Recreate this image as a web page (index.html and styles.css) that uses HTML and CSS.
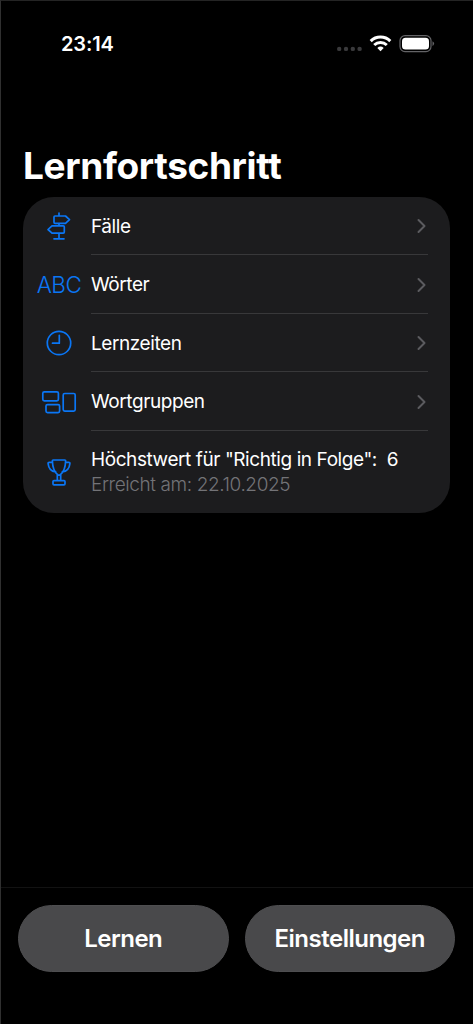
FILE: index.html
```html
<!DOCTYPE html>
<html lang="de">
<head>
<meta charset="utf-8">
<title>Lernfortschritt</title>
<link rel="stylesheet" href="styles.css">
</head>
<body>
<div class="screen">
  <header class="status">
    <span class="time">23:14</span>
    <svg class="status-icons" width="100" height="20" viewBox="0 0 100 20">
      <g fill="#3a3a3c"><circle cx="4.2" cy="14.9" r="2.2"/><circle cx="11" cy="14.9" r="2.2"/><circle cx="17.8" cy="14.9" r="2.2"/><circle cx="24.6" cy="14.9" r="2.2"/></g>
      <g fill="none" stroke="#fff" stroke-width="3"><path d="M35.7 7.1a14 14 0 0 1 19.6 0"/><path d="M39.2 11a9.2 9.2 0 0 1 12.6 0"/></g>
      <path d="M42.3 14a4.8 4.8 0 0 1 6.4 0L45.5 17.3z" fill="#fff"/>
      <rect x="65" y="1.6" width="31" height="16" rx="5" fill="none" stroke="#636366" stroke-width="1.2"/>
      <rect x="67" y="3.7" width="27" height="11.8" rx="3.5" fill="#fff"/>
      <path d="M97.5 7.2q1.6.8 1.6 2.4t-1.6 2.4z" fill="#636366"/>
    </svg>
  </header>
  <main class="content">
    <h1 class="title">Lernfortschritt</h1>
    <ul class="card">
      <li class="row">
        <svg class="icon" width="46" height="32" viewBox="0 0 46 32"><path d="M23 3v3M23 13.5v2.5M23 23.2v5.6M18 28.8h10M19 6h10.5l4 3.6-4 3.7H19q-1 0-1-1V7q0-1 1-1zM27.3 15.8H16l-4 3.7 4 3.6h11.3q1 0 1-1v-5.3q0-1-1-1z"/></svg>
        <div class="cell"><span class="label">Fälle</span><svg class="chevron" width="10" height="16" viewBox="0 0 10 16"><path d="M1.5 2l6 6-6 6"/></svg></div>
      </li>
      <li class="row">
        <span class="abc">ABC</span>
        <div class="cell"><span class="label">Wörter</span><svg class="chevron" width="10" height="16" viewBox="0 0 10 16"><path d="M1.5 2l6 6-6 6"/></svg></div>
      </li>
      <li class="row">
        <svg class="icon" width="46" height="32" viewBox="0 0 46 32"><circle cx="23" cy="16" r="11.7"/><path d="M23.3 8.3v7.9h-6.8"/></svg>
        <div class="cell"><span class="label">Lernzeiten</span><svg class="chevron" width="10" height="16" viewBox="0 0 10 16"><path d="M1.5 2l6 6-6 6"/></svg></div>
      </li>
      <li class="row">
        <svg class="icon" width="46" height="32" viewBox="0 0 46 32"><rect x="6.8" y="5.8" width="15.6" height="9" rx="1.5"/><rect x="10" y="18.6" width="13.6" height="8" rx="1.5"/><rect x="27.2" y="7.5" width="12" height="17.6" rx="1.5"/></svg>
        <div class="cell"><span class="label">Wortgruppen</span><svg class="chevron" width="10" height="16" viewBox="0 0 10 16"><path d="M1.5 2l6 6-6 6"/></svg></div>
      </li>
      <li class="row row-record">
        <svg class="icon" width="46" height="32" viewBox="0 0 46 32"><path d="M17.3 4h11.4q1 0 .9 1-.3 9.5-5 13.3-.8.8-1.6.8t-1.6-.8Q16.700 14.5 16.4 5q-.1-1 .9-1zM16.5 6.300h-3.200q-1.300 0-1.200 1.300.8 7.500 7.600 8.300M29.500 6.300h3.200q1.300 0 1.200 1.300-.8 7.500-7.600 8.300M21.300 18.800v5.800M24.700 18.800v5.800M18 24.600h10q1 0 1 1v2.200q0 1-1 1H18q-1 0-1-1v-2.200q0-1 1-1z"/></svg>
        <div class="record">
          <span class="label">Höchstwert für "Richtig in Folge":&nbsp; 6</span>
          <span class="detail">Erreicht am: 22.10.2025</span>
        </div>
      </li>
    </ul>
  </main>
  <footer class="toolbar">
    <button class="button">Lernen</button>
    <button class="button">Einstellungen</button>
  </footer>
</div>
</body>
</html>
```
FILE: styles.css
```css
* { box-sizing: border-box; }
body { margin: 0; background: #000; color: #fff; font-family: Inter, "Liberation Sans", sans-serif; }
.screen { width: 473px; height: 1024px; display: flex; flex-direction: column; border-top: 1px solid #242424; border-left: 1px solid #303030; white-space: nowrap; }
.status { height: 142px; padding: 32px 38.5px 0 60px; display: flex; justify-content: space-between; align-items: flex-start; }
.time { font-size: 20px; line-height: 22px; font-weight: 600; letter-spacing: -0.1px; }
.status-icons { margin-top: 0.5px; }
.content { flex: 1; padding: 0 23px 0 22px; }
.title { margin: 0; height: 53.6px; padding-top: 1px; font-size: 37px; line-height: 43px; font-weight: 700; letter-spacing: -0.36px; font-variant-ligatures: none; font-feature-settings: "calt" 0, "liga" 0, "dlig" 0; }
.card { margin: 0; padding: 0; list-style: none; height: 316px; background: #1c1c1e; border-radius: 31px; }
.row { display: flex; align-items: center; height: 58.5px; padding: 0 22px 0 13px; }
.icon { flex: none; margin-top: 1px; fill: none; stroke: #0a76f5; stroke-width: 1.7; stroke-linecap: round; stroke-linejoin: round; }
.abc { width: 46px; text-align: center; color: #0a76f5; font-size: 22.5px; font-weight: 300; letter-spacing: -0.5px; }
.cell { flex: 1; height: 100%; margin-left: 9px; display: flex; align-items: center; justify-content: space-between; border-bottom: 1px solid #38383a; }
.label { padding-top: 2px; font-size: 19px; line-height: 25px; letter-spacing: -0.42px; }
.chevron { margin: 2px 1px 0 0; fill: none; stroke: #5b5b5f; stroke-width: 2; stroke-linecap: round; stroke-linejoin: round; }
.row-record { height: 82px; }
.record { margin-left: 9px; display: flex; flex-direction: column; }
.record .label { padding-top: 0; }
.detail { color: #737377; font-size: 19px; line-height: 25px; font-weight: 300; letter-spacing: -0.4px; }
.toolbar { height: 137px; border-top: 1px solid #121212; padding: 17px 18px 0 17px; display: flex; gap: 16px; }
.button { flex: 1; height: 67px; border: 1px solid #4e4e50; border-radius: 34px; background: #49494b; color: #fff; font: 600 24px/30px Inter, "Liberation Sans", sans-serif; padding: 0; letter-spacing: -0.5px; }
```
